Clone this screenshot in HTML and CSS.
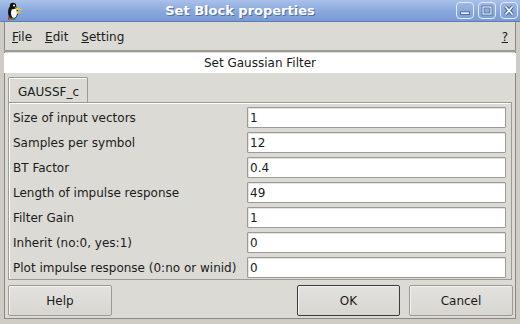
FILE: index.html
```html
<!DOCTYPE html>
<html lang="en">
<head>
    <meta charset="UTF-8">
    <title>Set Block properties</title>
    <link rel="stylesheet" href="styles.css">
</head>
<body>
    <div class="window">
        <!-- title bar -->
        <div class="titlebar">
            <svg class="app-icon" width="20" height="20" viewBox="0 0 20 20">
                <ellipse cx="9" cy="11" rx="5" ry="7" fill="#111"/>
                <ellipse cx="10" cy="12" rx="3" ry="5" fill="#fff"/>
                <circle cx="9" cy="5" r="3.2" fill="#111"/>
                <circle cx="10" cy="4.5" r="1" fill="#fff"/>
                <path d="M11 6 L19 9 L12 9 Z" fill="#f2d21b"/>
                <path d="M13 10 L18 11 L13 13 Z" fill="#e8c020"/>
                <path d="M4 15 L8 18 L4 19 Z" fill="#c43a3a"/>
                <path d="M8 16 L12 19 L7 19 Z" fill="#3b9a3b"/>
            </svg>
            <div class="title">Set Block properties</div>
            <div class="wm-buttons">
                <span class="wm-btn">
                    <svg width="18" height="17" viewBox="0 0 18 17"><rect x="4" y="10" width="10" height="3" fill="#eef3fc" stroke="#3e5f96" stroke-width="1"/></svg>
                </span>
                <span class="wm-btn">
                    <svg width="18" height="17" viewBox="0 0 18 17"><rect x="4.5" y="4.5" width="9" height="8" fill="none" stroke="#3e5f96" stroke-width="3"/><rect x="4.5" y="4.5" width="9" height="8" fill="none" stroke="#eef3fc" stroke-width="1.4"/></svg>
                </span>
                <span class="wm-btn">
                    <svg width="18" height="17" viewBox="0 0 18 17"><path d="M5 4 L13 13 M13 4 L5 13" stroke="#3e5f96" stroke-width="4"/><path d="M5 4 L13 13 M13 4 L5 13" stroke="#eef3fc" stroke-width="2"/></svg>
                </span>
            </div>
        </div>

        <div class="client">
            <div class="menubar">
                <span class="menu-item"><u>F</u>ile</span>
                <span class="menu-item"><u>E</u>dit</span>
                <span class="menu-item"><u>S</u>etting</span>
                <span class="menu-help"><u>?</u></span>
            </div>

            <div class="heading">Set Gaussian Filter</div>

            <div class="tabs">
                <div class="tab">GAUSSF_c</div>
            </div>

            <div class="panel">
                <div class="row"><label>Size of input vectors</label><input type="text" value="1"></div>
                <div class="row"><label>Samples per symbol</label><input type="text" value="12"></div>
                <div class="row"><label>BT Factor</label><input type="text" value="0.4"></div>
                <div class="row"><label>Length of impulse response</label><input type="text" value="49"></div>
                <div class="row"><label>Filter Gain</label><input type="text" value="1"></div>
                <div class="row"><label>Inherit (no:0, yes:1)</label><input type="text" value="0"></div>
                <div class="row"><label>Plot impulse response (0:no or winid)</label><input type="text" value="0"></div>
            </div>

            <div class="button-bar">
                <button class="button help">Help</button>
                <span class="spacer"></span>
                <button class="button ok">OK</button>
                <button class="button cancel">Cancel</button>
            </div>
        </div>
    </div>
</body>
</html>
```

FILE: styles.css
```css
body {
    margin: 0;
    padding: 0;
    font-family: "DejaVu Sans", sans-serif;
    font-size: 12px;
    color: #1a1a1a;
    background-color: #dcdad5;
}
.window {
    width: 520px;
    height: 324px;
    display: flex;
    flex-direction: column;
    background-color: #8da9db;
    overflow: hidden;
}
/* title bar */
.titlebar {
    height: 22px;
    display: flex;
    align-items: center;
    background: linear-gradient(#a9c1ea, #86a5dc 60%, #7b9bd4);
    border-bottom: 1px solid #5c7cb6;
    box-sizing: border-box;
}
.app-icon {
    margin-left: 4px;
    width: 20px;
    height: 20px;
}
.title {
    flex: 1;
    text-align: center;
    color: #ffffff;
    font-weight: bold;
    font-size: 13px;
    text-shadow: 1px 1px 0 #4f6fa8;
}
.wm-buttons {
    display: flex;
    gap: 4px;
    margin-right: 2px;
}
.wm-btn {
    width: 18px;
    height: 17px;
    border: 1px solid #e4ebf8;
    border-radius: 4px;
    box-sizing: border-box;
    display: flex;
    align-items: center;
    justify-content: center;
    background: linear-gradient(#9db6e4, #7f9fd7);
}
.wm-btn svg {
    width: 16px;
    height: 15px;
}
/* window content */
.client {
    flex: 1;
    display: flex;
    flex-direction: column;
    background-color: #dcdad5;
    border-left: 4px solid #cfccc6;
    border-right: 4px solid #cfccc6;
    border-bottom: 5px solid #cfccc6;
    box-shadow: inset 1px 0 #8a8884, inset -1px 0 #8a8884, inset 0 -1px #8a8884;
}
.menubar {
    height: 30px;
    display: flex;
    align-items: center;
    padding: 1px 8px 0 8px;
    border-bottom: 2px solid #9c9a94;
    box-sizing: border-box;
}
.menu-item {
    margin-right: 13px;
    font-size: 12px;
}
.menu-help {
    margin-left: auto;
}
.heading {
    height: 20px;
    line-height: 20px;
    background-color: #ffffff;
    text-align: center;
    margin-top: 1px;
}
.tabs {
    display: flex;
    padding: 4px 4px 0 4px;
}
.tab {
    height: 25px;
    line-height: 28px;
    padding: 0 9px;
    width: 80px;
    box-sizing: border-box;
    border: 1px solid #9c9a94;
    border-bottom: none;
    border-radius: 2px 2px 0 0;
    box-shadow: inset 1px 1px #ffffff;
}
.panel {
    margin: 0 4px 0 4px;
    width: 504px;
    box-sizing: border-box;
    border: 1px solid #9c9a94;
    box-shadow: inset 1px 1px #ffffff;
    padding: 4px 5px 1px 4px;
    display: flex;
    flex-direction: column;
    gap: 4px;
}
.row {
    display: flex;
    align-items: center;
    height: 21px;
}
.row label {
    flex: 1;
    padding-left: 0;
}
.row input {
    width: 259px;
    height: 21px;
    box-sizing: border-box;
    border: 1px solid #9c9a94;
    border-radius: 1px;
    font-family: "DejaVu Sans", sans-serif;
    font-size: 12px;
    color: #1a1a1a;
    padding: 0 2px;
    background-color: #ffffff;
    box-shadow: inset 1px 1px #e6e4e0;
}
.button-bar {
    display: flex;
    padding: 5px 3px 0 4px;
    gap: 9px;
}
.spacer {
    flex: 1;
}
.button {
    height: 31px;
    font-family: "DejaVu Sans", sans-serif;
    font-size: 12px;
    color: #1a1a1a;
    background: linear-gradient(#e4e2de, #d8d6d1);
    border: 1px solid #9c9a94;
    border-radius: 2px;
    box-shadow: inset 1px 1px #f4f3f1;
}
.help {
    width: 104px;
}
.ok {
    width: 103px;
    border-color: #3b3a38;
}
.cancel {
    width: 104px;
}
```
